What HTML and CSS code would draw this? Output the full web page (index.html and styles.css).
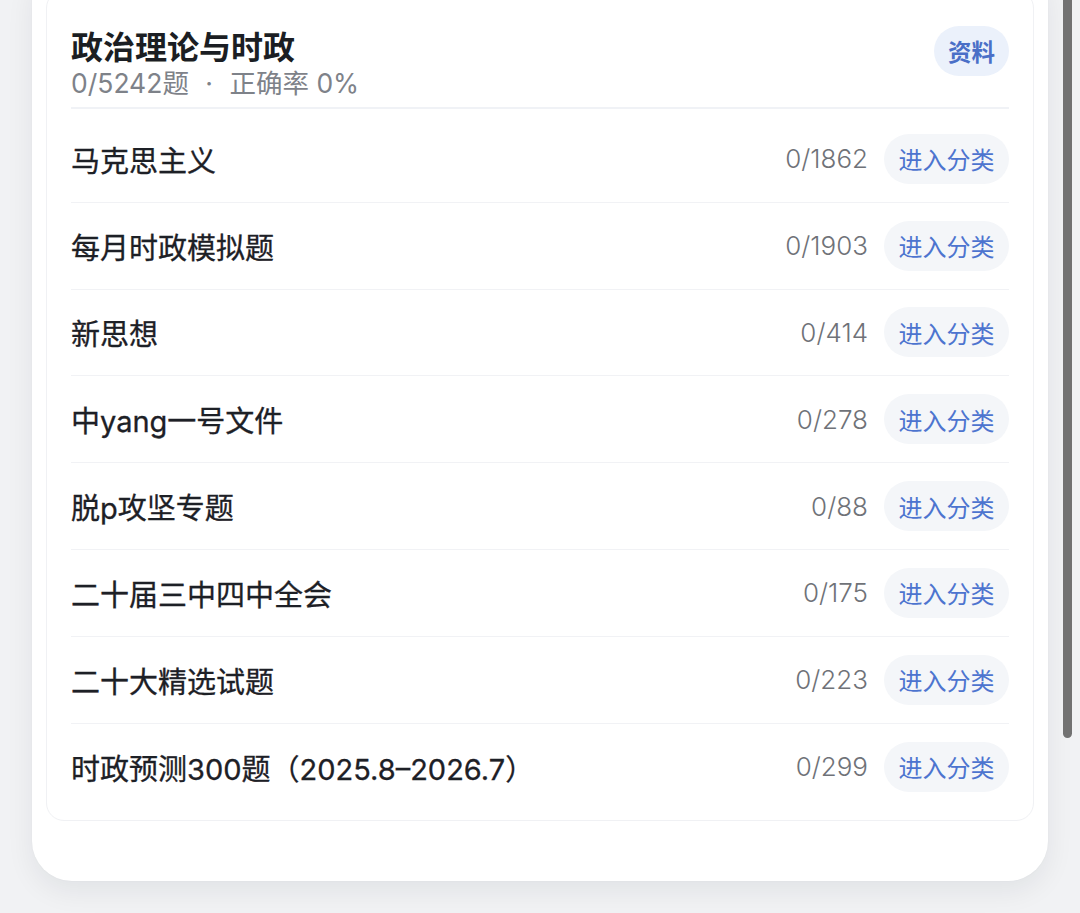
FILE: index.html
```html
<!DOCTYPE html>
<html lang="zh-CN">
<head>
<meta charset="utf-8">
<title>政治理论与时政</title>
<link rel="stylesheet" href="styles.css">
</head>
<body>
<div class="page">
  <section class="sheet">
    <div class="panel">
      <header class="panel-head">
        <div class="head-text">
          <h1 class="title">政治理论与时政</h1>
          <p class="meta">0/5242题 <span class="dot">·</span> 正确率 0%</p>
        </div>
        <button class="badge">资料</button>
      </header>
      <ul class="cats">
        <li class="cat"><span class="cat-name">马克思主义</span><span class="cat-count">0/1862</span><button class="enter">进入分类</button></li>
        <li class="cat"><span class="cat-name">每月时政模拟题</span><span class="cat-count">0/1903</span><button class="enter">进入分类</button></li>
        <li class="cat"><span class="cat-name">新思想</span><span class="cat-count">0/414</span><button class="enter">进入分类</button></li>
        <li class="cat"><span class="cat-name">中yang一号文件</span><span class="cat-count">0/278</span><button class="enter">进入分类</button></li>
        <li class="cat"><span class="cat-name">脱p攻坚专题</span><span class="cat-count">0/88</span><button class="enter">进入分类</button></li>
        <li class="cat"><span class="cat-name">二十届三中四中全会</span><span class="cat-count">0/175</span><button class="enter">进入分类</button></li>
        <li class="cat"><span class="cat-name">二十大精选试题</span><span class="cat-count">0/223</span><button class="enter">进入分类</button></li>
        <li class="cat"><span class="cat-name">时政预测300题（2025.8–2026.7）</span><span class="cat-count">0/299</span><button class="enter">进入分类</button></li>
      </ul>
    </div>
  </section>
  <div class="scroll-thumb"></div>
</div>
</body>
</html>
```

FILE: styles.css
```css
* {
  box-sizing: border-box;
}

html, body {
  margin: 0;
  height: 100%;
}

body {
  background: #f1f2f4;
  font-family: Inter, "Noto Sans CJK SC", sans-serif;
  color: #1f2228;
  overflow: hidden;
}

.page {
  position: relative;
  display: flow-root;
  height: 100%;
  padding: 0 32px;
}

/* outer white sheet, its top scrolled out of view */
.sheet {
  margin-top: -40px;
  width: 1016px;
  background: #ffffff;
  border-radius: 40px;
  padding: 30px 14px 60px;
  box-shadow: 0 10px 28px rgba(20, 24, 40, 0.07), 0 0 2px rgba(20, 24, 40, 0.04);
}

.panel {
  border: 1px solid #f0f1f4;
  border-radius: 18px;
  padding: 0 24px 10px;
  background: #fff;
}

.panel-head {
  display: flex;
  align-items: flex-start;
  justify-content: space-between;
  padding: 34px 0 8px;
  border-bottom: 2px solid #f0f2f6;
}

.title {
  margin: 0;
  font-family: "Noto Sans CJK SC", sans-serif;
  font-size: 32px;
  line-height: 40px;
  font-weight: 700;
  color: #1b1e23;
}

.meta {
  margin: 3px 0 0;
  font-size: 26.5px;
  line-height: 31px;
  color: #7e8289;
}

.dot {
  margin: 0 9px;
}

.badge {
  margin-top: 1px;
  height: 50px;
  padding: 0 14px;
  border: 0;
  border-radius: 25px;
  background: #ebf1fb;
  color: #4a6fc7;
  font-family: "Noto Sans CJK SC", sans-serif;
  font-size: 23.5px;
  font-weight: 700;
}

.cats {
  list-style: none;
  margin: 0;
  padding: 7px 0 0;
}

.cat {
  display: flex;
  align-items: center;
  height: 86.8px;
  border-bottom: 1px solid #f1f2f5;
}

.cat:last-child {
  border-bottom: 0;
}

.cat-name {
  flex: 1;
  font-size: 29px;
  font-weight: 400;
  color: #1d2026;
  font-family: Inter, "Noto Sans CJK SC", sans-serif;
  -webkit-text-stroke: 0.3px #1d2026;
}

.cat-count {
  margin-right: 16px;
  font-size: 26px;
  font-weight: 300;
  color: #6f7278;
}

.enter {
  height: 50px;
  padding: 0 14.5px;
  border: 0;
  border-radius: 25px;
  background: #f4f6f9;
  color: #4d74cf;
  font-family: "Noto Sans CJK SC", sans-serif;
  font-size: 24px;
  font-weight: 400;
}

/* overlay scrollbar thumb on the right edge */
.scroll-thumb {
  position: absolute;
  top: -20px;
  left: 1063px;
  width: 9px;
  height: 758px;
  border-radius: 5px;
  background: #727272;
}
```
